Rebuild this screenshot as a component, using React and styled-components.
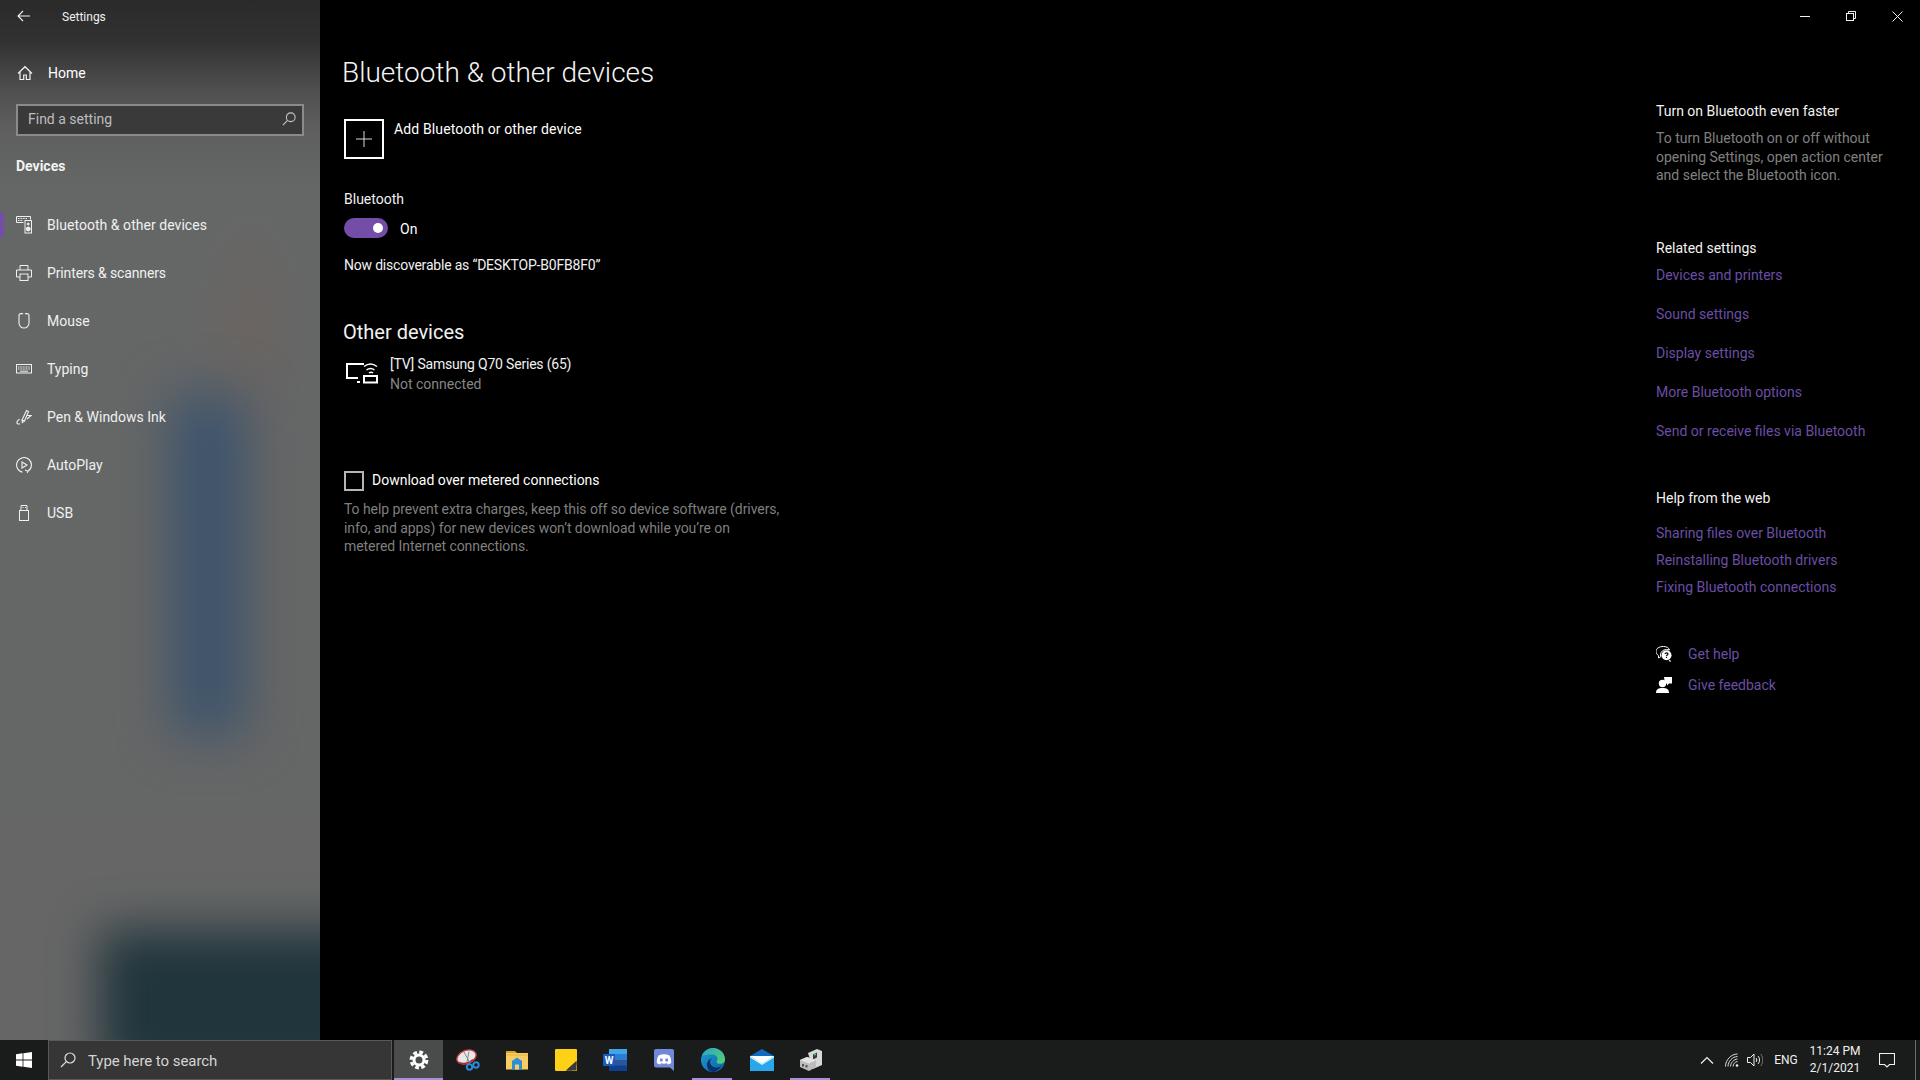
import React from "react";
import styled, { createGlobalStyle } from "styled-components";

const FONT = `Roboto, "Open Sans", "Liberation Sans", sans-serif`;

const Global = createGlobalStyle`
  html, body { margin: 0; padding: 0; background: #000; }
  * { box-sizing: border-box; }
  #root { width: 100%; }
`;

const Screen = styled.div`
  display: grid;
  grid-template-rows: 1040px 40px;
  width: 1920px;
  height: 1080px;
  overflow: hidden;
  font-family: ${FONT};
  font-size: 14px;
  color: #fff;
  background: #000;
`;
const Window = styled.div`
  display: grid;
  grid-template-columns: 320px 1fr;
  min-height: 0;
`;
const Sidebar = styled.nav`
  position: relative;
  overflow: hidden;
  background:
    radial-gradient(ellipse 60px 130px at 250px 330px, rgba(120, 95, 85, 0.28), transparent),
    linear-gradient(180deg, #2a2a2a 0, #313131 40px, #4f4f4f 90px, #5f5f5f 130px, #656767 190px, #666 100%);
  &::before {
    content: "";
    position: absolute;
    left: 172px;
    top: 395px;
    width: 72px;
    height: 340px;
    background: #3b536c;
    filter: blur(26px);
  }
  &::after {
    content: "";
    position: absolute;
    left: 100px;
    top: 930px;
    width: 320px;
    height: 150px;
    background: #20353c;
    filter: blur(24px);
  }
`;
const SideLayer = styled.div`
  position: relative;
  z-index: 1;
  display: flex;
  flex-direction: column;
`;
const AppHeader = styled.header`
  display: flex;
  align-items: center;
  height: 32px;
  font-size: 12px;
  color: #f0f0f0;
`;
const BackButton = styled.span`
  display: flex;
  align-items: center;
  justify-content: center;
  width: 48px;
  height: 32px;
`;
const AppTitle = styled.span`
  margin-left: 14px;
  margin-top: 1px;
`;
const HomeRow = styled.div`
  display: flex;
  align-items: center;
  gap: 15px;
  height: 48px;
  margin-top: 17px;
  padding-left: 17px;
`;
const SearchBox = styled.div`
  display: flex;
  align-items: center;
  justify-content: space-between;
  height: 32px;
  margin: 7px 16px 0;
  padding: 0 6px 2px 10px;
  background: #3a3a3a;
  border: 2px solid #8b8b8b;
  color: #bdbdbd;
`;
const SectionTitle = styled.h2`
  margin: 20px 0 0 16px;
  font-size: 14px;
  line-height: 20px;
  font-weight: 700;
  color: #f2f2f2;
`;
const NavList = styled.div`
  display: flex;
  flex-direction: column;
  margin-top: 25px;
`;
const NavRow = styled.div`
  position: relative;
  display: flex;
  align-items: center;
  gap: 15px;
  height: 48px;
  padding-left: 16px;
  color: #f0f0f0;
  letter-spacing: ${(p) => p.$ls || 0}px;
  &::before {
    content: "";
    display: ${(p) => (p.$active ? "block" : "none")};
    position: absolute;
    left: 0;
    top: 12px;
    width: 4px;
    height: 24px;
    background: #744da9;
  }
`;
const NavIcon = styled.span`
  display: flex;
  align-items: center;
  justify-content: center;
  width: 16px;
  height: 16px;
`;

const Main = styled.main`
  display: flex;
  flex-direction: column;
  background: #000;
`;
const TitleBar = styled.div`
  display: flex;
  justify-content: flex-end;
  height: 32px;
`;
const WinControl = styled.span`
  display: flex;
  align-items: center;
  justify-content: center;
  width: 46px;
  height: 32px;
`;
const Body = styled.div`
  display: flex;
  justify-content: space-between;
`;
const Content = styled.section`
  display: flex;
  flex-direction: column;
  align-items: flex-start;
  padding: 21px 0 0 24px;
`;
const PageTitle = styled.h1`
  margin: 0 0 0 -2px;
  font-size: 28px;
  line-height: 40px;
  font-weight: 300;
  color: #f4f4f4;
`;
const AddRow = styled.div`
  display: flex;
  gap: 10px;
  margin-top: 26px;
  line-height: 20px;
  letter-spacing: 0.13px;
`;
const AddBox = styled.span`
  display: flex;
  align-items: center;
  justify-content: center;
  width: 40px;
  height: 40px;
  border: 2px solid #fff;
`;
const Line = styled.div`
  margin-top: ${(p) => p.$top || 0}px;
  line-height: 20px;
  color: ${(p) => p.$color || "#f0f0f0"};
  letter-spacing: ${(p) => p.$ls || 0}px;
`;
const ToggleRow = styled.div`
  display: flex;
  align-items: center;
  gap: 12px;
  height: 20px;
  margin-top: 9px;
`;
const ToggleLabel = styled.span`
  padding-top: 2px;
`;
const Toggle = styled.span`
  display: flex;
  align-items: center;
  justify-content: flex-end;
  width: 44px;
  height: 20px;
  padding-right: 5px;
  background: #744da9;
  border-radius: 10px;
  &::after {
    content: "";
    width: 10px;
    height: 10px;
    border-radius: 50%;
    background: #fff;
  }
`;
const SubTitle = styled.h3`
  margin: 43px 0 0 -1px;
  font-size: 20px;
  line-height: 28px;
  font-weight: 400;
  color: #f2f2f2;
`;
const DeviceRow = styled.div`
  display: flex;
  align-items: flex-start;
  gap: 12px;
  margin-top: 8px;
  padding-left: 2px;
`;
const DeviceIcon = styled.span`
  display: flex;
  margin-top: 8px;
`;
const CheckRow = styled.div`
  display: flex;
  align-items: flex-start;
  gap: 8px;
  height: 20px;
  margin-top: 77px;
  line-height: 18px;
`;
const CheckBox = styled.span`
  width: 20px;
  height: 20px;
  border: 2px solid #b5b5b5;
`;
const Note = styled.p`
  margin: ${(p) => p.$top}px 0 0;
  line-height: 18.6px;
  color: ${(p) => p.$color};
  letter-spacing: ${(p) => p.$ls || 0}px;
`;
const Aside = styled.aside`
  display: flex;
  flex-direction: column;
  align-items: flex-start;
  width: 264px;
  padding-top: 69px;
`;
const AsideHead = styled.div`
  margin-top: ${(p) => p.$top || 0}px;
  line-height: 20px;
  color: #f2f2f2;
`;
const LinkList = styled.div`
  display: flex;
  flex-direction: column;
  gap: ${(p) => p.$gap}px;
  margin-top: ${(p) => p.$top}px;
`;
const TextLink = styled.a`
  line-height: 20px;
  color: #6a4ea6;
`;
const HelpRow = styled.div`
  display: flex;
  align-items: center;
  gap: 16px;
  height: 20px;
  margin-top: ${(p) => p.$top}px;
`;

const Taskbar = styled.footer`
  display: flex;
  align-items: stretch;
  height: 40px;
  background: #1a1b1b;
`;
const StartButton = styled.span`
  display: flex;
  align-items: center;
  justify-content: center;
  width: 48px;
`;
const TaskSearch = styled.div`
  display: flex;
  align-items: center;
  gap: 12px;
  width: 344px;
  padding-left: 11px;
  background: #363636;
  border: 1px solid #5a5a5a;
  font-size: 15px;
  color: #d4d4d4;
`;
const SearchHint = styled.span`
  padding-top: 2px;
  letter-spacing: -0.06px;
`;
const TaskApps = styled.div`
  display: flex;
  margin-left: 2px;
`;
const TaskApp = styled.span`
  position: relative;
  display: flex;
  align-items: center;
  justify-content: center;
  width: 49px;
  background: ${(p) => (p.$active ? "#4a4b4b" : "transparent")};
  &::after {
    content: "";
    display: ${(p) => (p.$running ? "block" : "none")};
    position: absolute;
    bottom: 0;
    left: ${(p) => (p.$active ? "0" : "4px")};
    right: ${(p) => (p.$active ? "0" : "5px")};
    height: 2px;
    background: #a98fdc;
  }
`;
const Tray = styled.div`
  display: flex;
  align-items: center;
  margin-left: auto;
  color: #f0f0f0;
  font-size: 12px;
`;
const TrayIcon = styled.span`
  display: flex;
  align-items: center;
  justify-content: center;
  width: ${(p) => p.$w}px;
`;
const Clock = styled.div`
  display: flex;
  flex-direction: column;
  align-items: center;
  width: 48px;
  margin-left: 8px;
  line-height: 17px;
  white-space: nowrap;
`;
const DesktopEdge = styled.span`
  width: 1px;
  height: 40px;
  margin: 0 4px 0 0;
  background: #6b6b6b;
`;

const S = { fill: "none", stroke: "#f0f0f0", strokeWidth: 1 };

const Back = () => (
  <svg width="14" height="12" viewBox="0 0 14 12" fill="none" stroke="#f0f0f0" strokeWidth="1.1">
    <path d="M13 6H1M6 1 1 6l5 5" />
  </svg>
);
const HomeI = () => (
  <svg width="16" height="16" viewBox="0 0 16 16" {...S} strokeWidth="1.2">
    <path d="M1 8.5 8 1.7l7 6.8M3 7v7.5h3.7V10h2.6v4.5H13V7" />
  </svg>
);
const Loupe = ({ size = 14, color = "#c8c8c8" }) => (
  <svg width={size} height={size} viewBox="0 0 16 16" fill="none" stroke={color} strokeWidth="1.2">
    <circle cx="10" cy="6" r="5" />
    <path d="M6.3 9.7 1 15" />
  </svg>
);
const BtI = () => (
  <svg width="16" height="18" viewBox="0 0 16 18" {...S}>
    <path d="M.5 6.5V.5h14v3" />
    <path d="M.5 6.5h7" />
    <path d="M2 2.5h9M2 4.5h5" strokeDasharray="1 .6" />
    <rect x="9" y="4.5" width="6.5" height="12.5" />
    <circle cx="12.2" cy="8" r="1" fill="#f0f0f0" />
    <circle cx="12.2" cy="13" r="2" fill="#f0f0f0" />
  </svg>
);
const PrinterI = () => (
  <svg width="16" height="16" viewBox="0 0 16 16" {...S}>
    <path d="M4 5V.5h8V5M4 12H.5V5h15v7H12" />
    <rect x="4" y="9" width="8" height="6.5" />
  </svg>
);
const MouseI = () => (
  <svg width="12" height="16" viewBox="0 0 12 16" {...S} strokeWidth="1.1">
    <path d="M5 .6H3C1.700 .6 1 1.400 1 2.600V10a5 5 0 0 0 10 0V2.600C11 1.400 10.300 .6 9 .6H7" />
  </svg>
);
const KeyboardI = () => (
  <svg width="16" height="10" viewBox="0 0 16 10" {...S}>
    <rect x=".5" y=".5" width="15" height="8.5" />
    <path d="M2 3h12M2 5h12" strokeDasharray="1 .6" />
    <path d="M4 7.2h8" />
  </svg>
);
const PenI = () => (
  <svg width="16" height="16" viewBox="0 0 16 16" {...S} strokeWidth="1.1">
    <path d="M6 11 10.5 1.5l2 1L8.5 12zM6 11l.3 2.5 2.2-1.500M4 14.800c-2 .8-3.500-.4-3-2 .3-1 1.300-1.800 2.600-2.600M11.500 6.500h3.700L11 10" />
  </svg>
);
const AutoI = () => (
  <svg width="16" height="16" viewBox="0 0 16 16" {...S} strokeWidth="1.1">
    <path d="M6.500 15.200A7.400 7.400 0 1 1 12 14.200M9 13l3 1.300-.8 1.600" />
    <path d="M6 5l5 3-5 3z" />
  </svg>
);
const UsbI = () => (
  <svg width="10" height="16" viewBox="0 0 10 16" {...S}>
    <rect x=".5" y="5.500" width="9" height="10" />
    <path d="M2 5.500V.5h6v5" />
    <path d="M3.500 2.500h1M6 2.500h1" />
  </svg>
);
const Minimize = () => (
  <svg width="10" height="1"><rect width="10" height="1" fill="#f0f0f0" /></svg>
);
const Restore = () => (
  <svg width="10" height="10" viewBox="0 0 10 10" {...S}>
    <rect x=".5" y="2.500" width="7" height="7" />
    <path d="M2.500 2.500v-2h7v7h-2" />
  </svg>
);
const CloseI = () => (
  <svg width="11" height="11" viewBox="0 0 11 11" {...S}>
    <path d="M.5.5l10 10M10.500.5l-10 10" />
  </svg>
);
const Plus = () => (
  <svg width="16" height="16" viewBox="0 0 16 16">
    <path d="M8 0v16M0 8h16" stroke="#d8d8d8" strokeWidth="1" />
  </svg>
);
const TvI = () => (
  <svg width="32" height="22" viewBox="0 0 32 22" fill="none" stroke="#fff" strokeWidth="2">
    <path d="M12 16H1V2h17" />
    <path d="M11 20h3" />
    <rect x="18" y="14" width="13" height="6.500" />
    <path d="M18 4.500c4-3 9-3 13 0M20.500 8c2.500-2 5.500-2 8 0M23 11c1.300-1 2.700-1 4 0" strokeWidth="1.500" />
  </svg>
);
const GetHelpI = () => (
  <svg width="16" height="16" viewBox="0 0 16 16">
    <path d="M7.500 0.500c3.500 0 5.500 1.500 6 3.500-1-.3-2-.5-3-.5C7 3.500 4.500 6 4.500 9c0 .6.100 1.200.3 1.700L2.500 12V9.600C1 8.500 0 7 0 5.500 0 2.500 3 .5 7.500.5z" fill="none" stroke="#fff" strokeWidth="1" />
    <circle cx="10.500" cy="9.300" r="5" fill="#fff" />
    <path d="M12.500 15l2.500 1-1-2.500z" fill="#fff" />
    <path d="M9 8c.2-1.500 3-1.500 3 0 0 1.100-1.500 1-1.500 2.200M10.500 11v1" stroke="#000" strokeWidth="1.200" fill="none" />
  </svg>
);
const FeedbackI = () => (
  <svg width="16" height="16" viewBox="0 0 16 16" fill="#fff">
    <path d="M8 0h8v6.500h-3L11 8.500V6.500H9z" />
    <circle cx="6.500" cy="6.500" r="3.700" />
    <path d="M0 16c0-4 2.500-5 6.500-5s6.500 1 6.500 5z" />
  </svg>
);

const WinLogo = () => (
  <svg width="16" height="16" viewBox="0 0 16 16" fill="#fff">
    <path d="M0 2.300 6.600 1.300V7.600H0zM7.400 1.200 16 0v7.600H7.400zM0 8.400h6.600v6.300L0 13.700zM7.400 8.400H16V16l-8.600-1.200z" />
  </svg>
);
const Gear = () => (
  <svg width="20" height="20" viewBox="0 0 20 20" fill="none" stroke="#fff">
    <circle cx="10" cy="10" r="5" strokeWidth="3" />
    <circle cx="10" cy="10" r="7.800" strokeWidth="3.200" strokeDasharray="3.800 2.330" />
  </svg>
);
const Snip = () => (
  <svg width="24" height="24" viewBox="0 0 24 24" fill="none">
    <ellipse cx="10.500" cy="9" rx="10" ry="6.500" transform="rotate(-22 10.500 9)" fill="#e8e8e8" stroke="#c8404a" strokeWidth="1.400" />
    <path d="M3 14.500c4 2 9 .8 14-3" stroke="#a03038" strokeWidth="1.500" />
    <path d="M8 4 14 15M13 3.500 11 14" stroke="#888" strokeWidth="1" />
    <circle cx="13.500" cy="19" r="2.700" stroke="#2b88d8" strokeWidth="2" />
    <circle cx="20" cy="17" r="2.700" stroke="#2b88d8" strokeWidth="2" />
  </svg>
);
const Folder = () => (
  <svg width="22" height="20" viewBox="0 0 22 20">
    <path d="M0 1h9l2 2H0z" fill="#e0a020" />
    <path d="M0 3h22v16.500H0z" fill="#f5cd63" />
    <path d="M0 5h22" stroke="#e8b33f" strokeWidth="1" />
    <path d="M6 11l5-3.500 5 3.500v8.500H6z" fill="#2e8fd8" />
    <path d="M9 14.500h4v5H9z" fill="#f5cd63" />
  </svg>
);
const Sticky = () => (
  <svg width="22" height="22" viewBox="0 0 22 22">
    <rect width="22" height="22" rx="1" fill="#fcd116" />
    <path d="M11 21.500h6L21.500 16v-4z" fill="#3a3a3a" />
    <path d="M11 21.500 21.500 12v8.500a1 1 0 0 1-1 1z" fill="#3a3a3a" />
  </svg>
);
const WordI = () => (
  <svg width="24" height="22" viewBox="0 0 24 22">
    <rect x="6" y="0" width="18" height="22" rx="1" fill="#2b579a" />
    <rect x="6" y="0" width="18" height="5.500" fill="#41a5ee" />
    <rect x="6" y="5.500" width="18" height="5.500" fill="#2b7cd3" />
    <rect x="6" y="16.500" width="18" height="5.500" fill="#103f91" />
    <rect x="0" y="5" width="12" height="12" fill="#185abd" />
    <text x="6" y="14.500" textAnchor="middle" fontSize="10" fontWeight="700" fill="#fff" fontFamily="Roboto, sans-serif">W</text>
  </svg>
);
const Discord = () => (
  <svg width="20" height="22" viewBox="0 0 20 22">
    <path d="M2 0h16a2 2 0 0 1 2 2v20l-4-3.500H2a2 2 0 0 1-2-2V2a2 2 0 0 1 2-2z" fill="#7289da" />
    <path d="M4.500 6.500C8 4.800 12 4.800 15.500 6.500c1.400 2.500 1.900 5 1.700 7.500-1 .8-2.200 1.300-3.300 1.500l-.8-1.200c-2.300.6-4 .6-6.200 0l-.8 1.200C5 15.300 3.800 14.800 2.800 14c-.2-2.500.3-5 1.700-7.500z" fill="#fff" />
    <ellipse cx="7.300" cy="11" rx="1.500" ry="1.700" fill="#7289da" />
    <ellipse cx="12.700" cy="11" rx="1.500" ry="1.700" fill="#7289da" />
  </svg>
);
const Edge = () => (
  <svg width="24" height="24" viewBox="0 0 24 24">
    <defs>
      <linearGradient id="edgeA" x1="0" y1="0" x2="1" y2="1">
        <stop offset="0" stopColor="#1f9fd0" />
        <stop offset="1" stopColor="#0b5fa8" />
      </linearGradient>
      <linearGradient id="edgeB" x1="0" y1="0" x2="1" y2="1">
        <stop offset="0" stopColor="#2aa5c8" />
        <stop offset="1" stopColor="#58d26a" />
      </linearGradient>
    </defs>
    <circle cx="12" cy="12" r="12" fill="url(#edgeA)" />
    <path d="M1 8C3 2.500 8 0 12 0c6.500 0 12 5 12 11.500 0 2.800-2.300 4.300-5 4.300-2 0-3.500-.7-3.500-1.800 0-1 1-1.300 1-3 0-2.500-2.500-4.500-5.500-4.500C6 6.500 3 7 1 8z" fill="url(#edgeB)" />
    <path d="M9 13.500c0 3.500 3 6 6.500 6 2 0 3.800-.7 5-1.800-2 3.700-5.500 6.300-8.500 6.300-4 0-6-4-6-7s2-6 5-6.500c-1 .8-2 1.800-2 3z" fill="#0a2f6b" />
  </svg>
);
const Mail = () => (
  <svg width="24" height="22" viewBox="0 0 24 22">
    <path d="M0 7 12 0l12 7v15H0z" fill="#0f6cbd" />
    <path d="M0 7h24v15H0z" fill="#28a8ea" />
    <path d="M0 7l12 7.500L24 7v1.500L12 16 0 8.500z" fill="#d8f0fb" />
    <path d="M0 7l12 7.500L24 7H0z" fill="#fff" />
  </svg>
);
const DeviceApp = () => (
  <svg width="22" height="22" viewBox="0 0 22 22">
    <path d="M8 4l9-4 5 2v14l-9 4z" fill="#d8d8d8" />
    <path d="M13 5.500 17 3.500v5l-4 2z" fill="#3a3a3a" />
    <circle cx="15" cy="5.500" r="1" fill="#50d060" />
    <path d="M0 11l7-3 9 3v7l-7 4-9-4z" fill="#bdbdbd" />
    <path d="M0 11l9 3.500 7-3.500-9-3z" fill="#e4e4e4" />
    <rect x="2" y="15" width="2" height="2.500" fill="#555" />
    <rect x="5.500" y="16" width="2" height="2.500" fill="#555" />
  </svg>
);
const Chevron = () => (
  <svg width="14" height="8" viewBox="0 0 14 8" fill="none" stroke="#f0f0f0" strokeWidth="1.200">
    <path d="M1 7.500 7 1.500l6 6" />
  </svg>
);
const Wifi = () => (
  <svg width="14" height="14" viewBox="0 0 14 14" fill="none" stroke="#d8d8d8" strokeWidth="1">
    <path d="M.5 13.500C.5 7 6 1 12.500 1M3 13.500C3 8.500 7.500 3.500 12.500 3.500M5.500 13.500C5.500 10 9 6 12.500 6M8 13.500c0-2 2-5 4.500-5" />
    <circle cx="12" cy="12.500" r="1.300" fill="#f0f0f0" stroke="none" />
  </svg>
);
const Speaker = () => (
  <svg width="16" height="14" viewBox="0 0 16 14" fill="none" stroke="#f0f0f0" strokeWidth="1">
    <path d="M.5 4.500h3L7 1v12L3.500 9.500h-3z" />
    <path d="M9 5c1 1 1 3 0 4M11 3c2 2 2 6 0 8" />
    <path d="M13.500 1c3 3 3 9 0 12" stroke="#777" />
  </svg>
);
const Notify = () => (
  <svg width="16" height="15" viewBox="0 0 16 15" fill="none" stroke="#f0f0f0" strokeWidth="1.100">
    <path d="M.5.500h15v11h-5L8 14l-2.500-2.500h-5z" />
  </svg>
);

const NAV = [
  ["Bluetooth & other devices", BtI, true, 0.04],
  ["Printers & scanners", PrinterI, false, -0.13],
  ["Mouse", MouseI],
  ["Typing", KeyboardI],
  ["Pen & Windows Ink", PenI],
  ["AutoPlay", AutoI],
  ["USB", UsbI],
];
const RELATED = ["Devices and printers", "Sound settings", "Display settings", "More Bluetooth options", "Send or receive files via Bluetooth"];
const WEB = ["Sharing files over Bluetooth", "Reinstalling Bluetooth drivers", "Fixing Bluetooth connections"];
const APPS = [
  [Gear, true, true],
  [Snip],
  [Folder],
  [Sticky],
  [WordI],
  [Discord],
  [Edge, false, true],
  [Mail],
  [DeviceApp, false, true],
];

export default function App() {
  return (
    <Screen>
      <Global />
      <Window>
        <Sidebar>
          <SideLayer>
            <AppHeader>
              <BackButton><Back /></BackButton>
              <AppTitle>Settings</AppTitle>
            </AppHeader>
            <HomeRow><HomeI /><span>Home</span></HomeRow>
            <SearchBox><span>Find a setting</span><Loupe /></SearchBox>
            <SectionTitle>Devices</SectionTitle>
            <NavList>
              {NAV.map(([label, Icon, active, ls]) => (
                <NavRow key={label} $active={active} $ls={ls}>
                  <NavIcon><Icon /></NavIcon>
                  <span>{label}</span>
                </NavRow>
              ))}
            </NavList>
          </SideLayer>
        </Sidebar>
        <Main>
          <TitleBar>
            <WinControl><Minimize /></WinControl>
            <WinControl><Restore /></WinControl>
            <WinControl><CloseI /></WinControl>
          </TitleBar>
          <Body>
            <Content>
              <PageTitle>Bluetooth &amp; other devices</PageTitle>
              <AddRow>
                <AddBox><Plus /></AddBox>
                <span>Add Bluetooth or other device</span>
              </AddRow>
              <Line $top={30}>Bluetooth</Line>
              <ToggleRow><Toggle /><ToggleLabel>On</ToggleLabel></ToggleRow>
              <Line $top={17} $ls={-0.2}>Now discoverable as “DESKTOP-B0FB8F0”</Line>
              <SubTitle>Other devices</SubTitle>
              <DeviceRow>
                <DeviceIcon><TvI /></DeviceIcon>
                <div>
                  <Line $ls={-0.2}>[TV] Samsung Q70 Series (65)</Line>
                  <Line $color="#868686">Not connected</Line>
                </div>
              </DeviceRow>
              <CheckRow><CheckBox /><span>Download over metered connections</span></CheckRow>
              <Note $top={9} $color="#7f7f7f" $ls={-0.07}>
                To help prevent extra charges, keep this off so device software (drivers,<br />
                info, and apps) for new devices won’t download while you’re on<br />
                metered Internet connections.
              </Note>
            </Content>
            <Aside>
              <AsideHead>Turn on Bluetooth even faster</AsideHead>
              <Note $top={8} $color="#808080">
                To turn Bluetooth on or off without<br />
                opening Settings, open action center<br />
                and select the Bluetooth icon.
              </Note>
              <AsideHead $top={53}>Related settings</AsideHead>
              <LinkList $gap={19} $top={7}>
                {RELATED.map((t) => <TextLink key={t}>{t}</TextLink>)}
              </LinkList>
              <AsideHead $top={47}>Help from the web</AsideHead>
              <LinkList $gap={7} $top={15}>
                {WEB.map((t) => <TextLink key={t}>{t}</TextLink>)}
              </LinkList>
              <HelpRow $top={47}><GetHelpI /><TextLink>Get help</TextLink></HelpRow>
              <HelpRow $top={11}><FeedbackI /><TextLink>Give feedback</TextLink></HelpRow>
            </Aside>
          </Body>
        </Main>
      </Window>
      <Taskbar>
        <StartButton><WinLogo /></StartButton>
        <TaskSearch><Loupe size={16} color="#e0e0e0" /><SearchHint>Type here to search</SearchHint></TaskSearch>
        <TaskApps>
          {APPS.map(([Icon, active, running], i) => (
            <TaskApp key={i} $active={active} $running={running}><Icon /></TaskApp>
          ))}
        </TaskApps>
        <Tray>
          <TrayIcon $w={32}><Chevron /></TrayIcon>
          <TrayIcon $w={18}><Wifi /></TrayIcon>
          <TrayIcon $w={28}><Speaker /></TrayIcon>
          <TrayIcon $w={34}>ENG</TrayIcon>
          <Clock><span>11:24 PM</span><span>2/1/2021</span></Clock>
          <TrayIcon $w={56}><Notify /></TrayIcon>
          <DesktopEdge />
        </Tray>
      </Taskbar>
    </Screen>
  );
}
